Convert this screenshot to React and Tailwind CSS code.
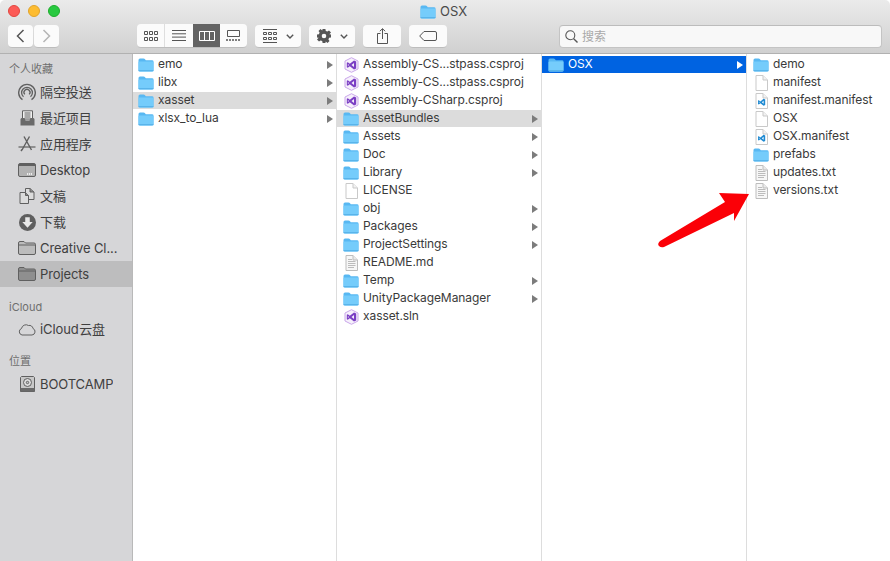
function Folder({ className = "", dark = false }) {
  return (
    <svg viewBox="0 0 16 14" className={"h-[14px] w-[16px] shrink-0 " + className}>
      <path d="M0.5 2 Q0.5 0.5 2 0.5 H5.5 Q6.5 0.5 7 1.2 L7.8 2.2 H14 Q15.5 2.2 15.5 3.6 V12 Q15.5 13.5 14 13.5 H2 Q0.5 13.5 0.5 12 Z" fill={dark ? "#5cb4ec" : "#58b8f2"} />
      <path d="M0.5 4.4 Q0.5 3.6 1.5 3.6 H14.5 Q15.5 3.6 15.5 4.4 V12 Q15.5 13.5 14 13.5 H2 Q0.5 13.5 0.5 12 Z" fill="#75ccfb" />
      <path d="M0.5 12.6 H15.5" stroke="#4ea9e2" strokeWidth="0.8" />
    </svg>
  );
}

function Blank() {
  return (
    <svg viewBox="0 0 13 16" className="h-4 w-[13px] shrink-0">
      <path d="M1 .5 H8 L12.5 5 V15.5 H1 Z" fill="#fff" stroke="#c9c9c9" />
      <path d="M8 .5 V5 H12.5" fill="#f2f2f2" stroke="#c9c9c9" />
    </svg>
  );
}

function TextFile() {
  return (
    <svg viewBox="0 0 13 16" className="h-4 w-[13px] shrink-0">
      <path d="M1 .5 H8 L12.5 5 V15.5 H1 Z" fill="#f7f7f7" stroke="#bdbdbd" />
      <path d="M8 .5 V5 H12.5" fill="#eaeaea" stroke="#bdbdbd" />
      <path d="M3 4.5 H7 M3 6.5 H10.5 M3 8.5 H10.5 M3 10.5 H10.5 M3 12.5 H9" stroke="#b4b4b4" strokeWidth="0.9" />
    </svg>
  );
}

function VsProj() {
  return (
    <svg viewBox="0 0 15 16" className="h-4 w-[15px] shrink-0">
      <path d="M7.5 .7 L14 4 V12 L7.5 15.3 L1 12 V4 Z" fill="#f6f0fb" stroke="#c9a6ea" />
      <path d="M10 3.5 L12.2 4.5 V11.5 L10 12.5 L5.8 9.2 L3.8 10.8 L2.8 10.2 V5.8 L3.8 5.2 L5.8 6.8 Z M10 5.9 L7.5 8 L10 10.1 Z M3.9 6.9 V9.1 L5 8 Z" fill="#7b3fc4" fillRule="evenodd" />
    </svg>
  );
}

function VsCodeFile() {
  return (
    <svg viewBox="0 0 13 16" className="h-4 w-[13px] shrink-0">
      <path d="M1 .5 H8 L12.5 5 V15.5 H1 Z" fill="#fff" stroke="#c9c9c9" />
      <path d="M8 .5 V5 H12.5" fill="#f2f2f2" stroke="#c9c9c9" />
      <path d="M8.6 5.8 L10.2 6.6 V12 L8.6 12.8 L5.4 10.2 L3.8 11.4 L3 11 V7.6 L3.8 7.2 L5.4 8.4 Z M8.6 7.8 L6.9 9.3 L8.6 10.8 Z M3.9 8.5 V10.1 L4.7 9.3 Z" fill="#1f8ad2" fillRule="evenodd" />
    </svg>
  );
}

const icons = { folder: Folder, blank: Blank, text: TextFile, vs: VsProj, code: VsCodeFile };

const columns = [
  {
    width: "w-[204px]",
    indent: "pl-[5px]",
    items: [
      ["emo", "folder"],
      ["libx", "folder"],
      ["xasset", "folder", "gray"],
      ["xlsx_to_lua", "folder"],
    ],
  },
  {
    width: "w-[205px]",
    indent: "pl-[6px]",
    items: [
      ["Assembly-CS...stpass.csproj", "vs"],
      ["Assembly-CS...stpass.csproj", "vs"],
      ["Assembly-CSharp.csproj", "vs"],
      ["AssetBundles", "folder", "gray"],
      ["Assets", "folder"],
      ["Doc", "folder"],
      ["Library", "folder"],
      ["LICENSE", "blank"],
      ["obj", "folder"],
      ["Packages", "folder"],
      ["ProjectSettings", "folder"],
      ["README.md", "text"],
      ["Temp", "folder"],
      ["UnityPackageManager", "folder"],
      ["xasset.sln", "vs"],
    ],
  },
  {
    width: "w-[205px]",
    indent: "pl-[6px]",
    items: [["OSX", "folder", "blue"]],
  },
  {
    width: "flex-1",
    indent: "pl-[6px]",
    last: true,
    items: [
      ["demo", "folder"],
      ["manifest", "blank"],
      ["manifest.manifest", "code"],
      ["OSX", "blank"],
      ["OSX.manifest", "code"],
      ["prefabs", "folder"],
      ["updates.txt", "text"],
      ["versions.txt", "text"],
    ],
  },
];

function Row({ name, kind, state, indent, noArrow }) {
  const Icon = icons[kind];
  const bg = state === "gray" ? "bg-[#dcdcdc]" : state === "blue" ? "bg-[#0063e1]" : "";
  const color = state === "blue" ? "text-white" : "text-[#3a3a3a]";
  return (
    <div className="h-[18px] pb-px">
      <div className={"flex h-[17px] items-center pr-[3px] " + indent + " " + bg}>
        <div className="flex w-[16px] shrink-0 justify-center">
          <Icon />
        </div>
        <span className={"ml-1 -mt-[2px] flex-1 truncate text-[12px] leading-[17px] tracking-[-0.08px] " + color}>{name}</span>
        {kind === "folder" && !noArrow && (
          <span className={"h-0 w-0 border-y-[4px] border-l-[6px] border-y-transparent " + (state === "blue" ? "border-l-white" : "border-l-[#7c7c7c]")} />
        )}
      </div>
    </div>
  );
}

function Column({ width, indent, items, last }) {
  return (
    <div className={width + " pt-0.5 " + (last ? "" : "border-r border-[#dddddd]")}>
      {items.map(([name, kind, state], i) => (
        <Row key={i} name={name} kind={kind} state={state} indent={indent} noArrow={last} />
      ))}
    </div>
  );
}

function Btn({ className = "", children }) {
  return (
    <div className={"flex h-[23px] items-center justify-center rounded-[4px] border-b border-[#bdbdbd] bg-[#fbfbfb] " + className}>
      {children}
    </div>
  );
}

function GroupIcon() {
  return (
    <svg viewBox="0 0 14 14" className="h-[14px] w-[14px]" fill="none" stroke="#555" strokeWidth="1">
      <path d="M0 .5 H14 M0 13.5 H14" />
      <path d="M.5 3.5 H3.5 V5.5 H.5 Z M5.5 3.5 H8.5 V5.5 H5.5 Z M10.5 3.5 H13.5 V5.5 H10.5 Z M.5 8.5 H3.5 V10.5 H.5 Z M5.5 8.5 H8.5 V10.5 H5.5 Z M10.5 8.5 H13.5 V10.5 H10.5 Z" />
    </svg>
  );
}

function Caret() {
  return (
    <svg viewBox="0 0 8 5" className="h-[5px] w-2" fill="none" stroke="#555" strokeWidth="1.4">
      <path d="M.8 .8 L4 4 L7.2 .8" />
    </svg>
  );
}

const cjk = "[font-family:Inter,'Noto_Sans_CJK_SC',sans-serif]";

function Toolbar() {
  return (
    <div className="relative h-[54px] shrink-0 rounded-t-[5px] border-b border-[#b1b1b1] bg-gradient-to-b from-[#ebebeb] to-[#d0d0d0] px-2 pt-[25px]">
      <div className="absolute left-2 top-[5px] flex gap-2">
        <span className="h-3 w-3 rounded-full border border-[#e2463f] bg-[#fc5b57]" />
        <span className="h-3 w-3 rounded-full border border-[#e1a32a] bg-[#fdbc30]" />
        <span className="h-3 w-3 rounded-full border border-[#1dad2b] bg-[#28c940]" />
      </div>
      <div className="absolute left-[420px] top-[4px] flex items-center gap-1">
        <Folder />
        <span className="text-[13px] leading-[15px] text-[#4a4a4a]">OSX</span>
      </div>

      <div className="flex items-start">
        <div className="flex gap-px">
          <Btn className="w-[25px]">
            <svg viewBox="0 0 9 14" className="h-[14px] w-[9px]" fill="none" stroke="#555" strokeWidth="1.5">
              <path d="M7.5 1 L1.5 7 L7.5 13" />
            </svg>
          </Btn>
          <Btn className="w-[25px]">
            <svg viewBox="0 0 9 14" className="h-[14px] w-[9px]" fill="none" stroke="#b5b5b5" strokeWidth="1.5">
              <path d="M1.5 1 L7.5 7 L1.5 13" />
            </svg>
          </Btn>
        </div>

        <div className="ml-[78px] -mt-px flex h-[24px] w-[110px] overflow-hidden rounded-[4px] border-b border-[#bdbdbd] bg-[#fbfbfb]">
          <div className="flex w-[28px] items-center justify-center border-r border-[#dedede]">
            <svg viewBox="0 0 14 10" className="h-[10px] w-[14px]" fill="none" stroke="#555">
              <path d="M.5 .5 H3.5 V3.5 H.5 Z M5.5 .5 H8.5 V3.5 H5.5 Z M10.5 .5 H13.5 V3.5 H10.5 Z M.5 6.5 H3.5 V9.5 H.5 Z M5.5 6.5 H8.5 V9.5 H5.5 Z M10.5 6.5 H13.5 V9.5 H10.5 Z" />
            </svg>
          </div>
          <div className="flex w-[28px] items-center justify-center">
            <svg viewBox="0 0 14 11" className="h-[11px] w-[14px]" stroke="#555">
              <path d="M0 .5 H14 M0 3.8 H14 M0 7.1 H14 M0 10.5 H14" />
            </svg>
          </div>
          <div className="flex w-[27px] items-center justify-center bg-[#636363]">
            <svg viewBox="0 0 16 10" className="h-[10px] w-4" fill="none" stroke="#fff">
              <path d="M.5 .5 H15.5 V9.5 H.5 Z M5.5 .5 V9.5 M10.5 .5 V9.5" />
            </svg>
          </div>
          <div className="flex w-[27px] items-center justify-center">
            <svg viewBox="0 0 15 11" className="h-[11px] w-[15px]" fill="none" stroke="#555">
              <path d="M1.5 .5 H13.5 V6.5 H1.5 Z" />
              <path d="M0 10 H15" strokeDasharray="2 1" strokeWidth="1.5" />
            </svg>
          </div>
        </div>

        <Btn className="ml-2 w-[46px] gap-[9px]">
          <GroupIcon />
          <Caret />
        </Btn>
        <Btn className="ml-2 w-[46px] gap-[9px]">
          <svg viewBox="0 0 14 14" className="h-[14px] w-[14px]">
            <path d="M5.6 0 H8.4 L8.8 1.9 L10.4 2.6 L12 1.5 L14 3.5 L12.4 5.3 L14 5.6 V8.4 L12.1 8.8 L11.4 10.4 L12.5 12 L10.5 14 L8.8 12.4 L8.4 14 H5.6 L5.2 12.1 L3.6 11.4 L2 12.5 L0 10.5 L1.6 8.8 L0 8.4 V5.6 L1.9 5.2 L2.6 3.6 L1.5 2 L3.5 0 L5.2 1.6 Z M7 4.7 A2.3 2.3 0 1 0 7 9.3 A2.3 2.3 0 1 0 7 4.7 Z" fill="#555" fillRule="evenodd" />
          </svg>
          <Caret />
        </Btn>
        <Btn className="ml-2 w-[38px]">
          <svg viewBox="0 0 11 16" className="h-4 w-[11px]" fill="none" stroke="#555">
            <path d="M3.5 5.5 H.5 V15.5 H10.5 V5.5 H7.5" />
            <path d="M5.5 11 V.8 M2.8 3.2 L5.5 .7 L8.2 3.2" />
          </svg>
        </Btn>
        <Btn className="ml-2 w-[38px]">
          <svg viewBox="0 0 18 10" className="h-[10px] w-[18px]" fill="none" stroke="#555">
            <path d="M5 .5 H16 Q17.5 .5 17.5 2 V8 Q17.5 9.5 16 9.5 H5 L.7 5 Z" />
          </svg>
        </Btn>

        <div className="ml-auto flex h-[23px] w-[323px] items-center gap-1 rounded-[4px] border border-[#c4c4c4] border-t-[#bcbcbc] bg-[#f8f8f8] pl-[5px]">
          <svg viewBox="0 0 13 13" className="h-[13px] w-[13px]" fill="none" stroke="#555" strokeWidth="1.1">
            <circle cx="5.3" cy="5.3" r="4.5" />
            <path d="M8.7 8.7 L12.5 12.5" strokeWidth="1.4" />
          </svg>
          <span className={"text-[12px] text-[#a9a9a9] " + cjk}>搜索</span>
        </div>
      </div>
    </div>
  );
}

function SideHead({ children, className = "" }) {
  return <div className={"pl-[9px] text-[11px] leading-[14px] text-[#6e6e6e] " + className}>{children}</div>;
}

function SideRow({ icon, label, active, className = "" }) {
  return (
    <div className={"flex h-[26px] items-center " + (active ? "bg-[#bdbdbe]" : "")}>
      <div className="ml-[18px] flex w-[18px] shrink-0 justify-center">{icon}</div>
      <span className={"ml-1 truncate text-[13px] leading-[16px] tracking-[-0.1px] text-[#404040] " + className}>{label}</span>
    </div>
  );
}

const ic = { fill: "none", stroke: "#606060", strokeWidth: 1 };

const sideIcons = {
  airdrop: (
    <svg viewBox="0 0 18 18" className="h-[18px] w-[18px]" {...ic}>
      <path d="M4.5 16.6 A8.3 8.3 0 1 1 13.5 16.6" strokeWidth="1.4" />
      <path d="M5.5 13.8 A5.4 5.4 0 1 1 12.5 13.8" strokeWidth="1.3" />
      <path d="M6.8 11.4 A3 3 0 1 1 11.2 11.4" strokeWidth="1.3" />
    </svg>
  ),
  recents: (
    <svg viewBox="0 0 15 16" className="h-4 w-[15px]">
      <path d="M2.5 .8 H12.5 V9 H2.5 Z" fill="#f0f0f0" stroke="#606060" />
      <path d="M4.5 3 H10.5 M4.5 5 H10.5 M4.5 7 H10.5" stroke="#606060" />
      <path d="M1.5 8 H4.5 L5.5 10.5 H9.5 L10.5 8 H13.5 L14.5 9 V15.5 H.5 V9 Z" fill="#6a6a6a" />
    </svg>
  ),
  apps: (
    <svg viewBox="0 0 18 16" className="h-4 w-[18px]" fill="none" stroke="#606060" strokeWidth="1.4">
      <path d="M6 .5 L13.5 14 M11.5 .5 L4 14" />
      <path d="M0.5 11 H17.5" strokeWidth="1.2" />
      <path d="M3 15 L4 13.5" />
    </svg>
  ),
  desktop: (
    <svg viewBox="0 0 18 14" className="h-[14px] w-[18px]">
      <rect x=".5" y=".5" width="17" height="13" rx="1.5" fill="#b2b2b2" stroke="#606060" />
      <rect x="1" y="1" width="16" height="2" fill="#606060" />
      <path d="M9 11 H14" stroke="#fff" strokeDasharray="1.2 .8" strokeWidth="1.4" />
    </svg>
  ),
  docs: (
    <svg viewBox="0 0 16 16" className="h-4 w-4" stroke="#606060">
      <path d="M6.5 .5 H11 L15 4 V11.5 H6.5 Z" fill="#dcdcdc" />
      <path d="M11 .5 V4 H15" fill="#8a8a8a" />
      <path d="M1 4.5 H6.5 L9.5 7.5 V15.5 H1 Z" fill="#dcdcdc" />
      <path d="M6.5 4.5 V7.5 H9.5" fill="#8a8a8a" />
    </svg>
  ),
  download: (
    <svg viewBox="0 0 18 18" className="h-[17px] w-[17px]">
      <circle cx="9" cy="9" r="9" fill="#5f5f5f" />
      <path d="M6.6 3.5 H11.4 V8.5 H14.5 L9 14.5 L3.5 8.5 H6.6 Z" fill="#e8e8e8" />
    </svg>
  ),
  folder: (dark) => (
    <svg viewBox="0 0 18 14" className="h-[14px] w-[18px]" stroke="#606060">
      <path d="M.5 2 Q.5 .5 2 .5 H6 L7.5 2 H16 Q17.5 2 17.5 3.5 V12 Q17.5 13.5 16 13.5 H2 Q.5 13.5 .5 12 Z" fill={dark ? "#8f8f8f" : "#bcbcbc"} />
      <path d="M.5 4 H17.5" />
    </svg>
  ),
  cloud: (
    <svg viewBox="0 0 18 13" className="h-[13px] w-[18px]" {...ic}>
      <path d="M4 12.5 H14 A3.4 3.4 0 0 0 15 6 A3.6 3.6 0 0 0 10.5 3 A4.6 4.6 0 0 0 3.5 6 A3.4 3.4 0 0 0 4 12.5 Z" transform="translate(0 -0.5)" />
    </svg>
  ),
  disk: (
    <svg viewBox="0 0 15 16" className="h-4 w-[15px]" stroke="#606060">
      <path d="M1.5 .5 H13.5 L14.5 1.5 V15.5 H.5 V1.5 Z" fill="#c8c8c8" />
      <rect x=".5" y="12" width="14" height="3.5" fill="#6a6a6a" stroke="none" />
      <circle cx="7.5" cy="6.5" r="4" fill="#dcdcdc" />
      <circle cx="7.5" cy="6.5" r="1.2" fill="#c8c8c8" />
    </svg>
  ),
};

function Sidebar() {
  return (
    <div className={"w-[133px] shrink-0 border-r border-[#b9b9b9] bg-[#d6d6d8] pt-2 " + cjk}>
      <SideHead className="mb-[3px]">个人收藏</SideHead>
      <SideRow icon={sideIcons.airdrop} label="隔空投送" />
      <SideRow icon={sideIcons.recents} label="最近项目" />
      <SideRow icon={sideIcons.apps} label="应用程序" />
      <SideRow icon={sideIcons.desktop} label="Desktop" />
      <SideRow icon={sideIcons.docs} label="文稿" />
      <SideRow icon={sideIcons.download} label="下载" />
      <SideRow icon={sideIcons.folder(false)} label="Creative Cl..." />
      <SideRow icon={sideIcons.folder(true)} label="Projects" active />
      <SideHead className="mb-[2px] mt-[13px]">iCloud</SideHead>
      <SideRow icon={sideIcons.cloud} label="iCloud 云盘" className="[word-spacing:-3px]" />
      <SideHead className="mb-[3px] mt-[12px]">位置</SideHead>
      <SideRow icon={sideIcons.disk} label="BOOTCAMP" />
    </div>
  );
}

export default function App() {
  return (
    <div className="relative flex h-[561px] w-[890px] flex-col overflow-hidden bg-white [font-family:Inter,sans-serif]">
      <Toolbar />
      <div className="flex flex-1">
        <Sidebar />
        {columns.map((c, i) => (
          <Column key={i} width={c.width} indent={c.indent} items={c.items} last={c.last} />
        ))}
      </div>
      {/* red annotation arrow on top of the screenshot */}
      <svg viewBox="0 0 890 561" className="pointer-events-none absolute inset-0 h-[561px] w-[890px]">
        <path d="M749 194 L719 193 L725 202 L660 241 Q657 244 659 246 Q661 248 664 247 L734 213 L734 221 Z" fill="#fb0007" />
      </svg>
    </div>
  );
}
